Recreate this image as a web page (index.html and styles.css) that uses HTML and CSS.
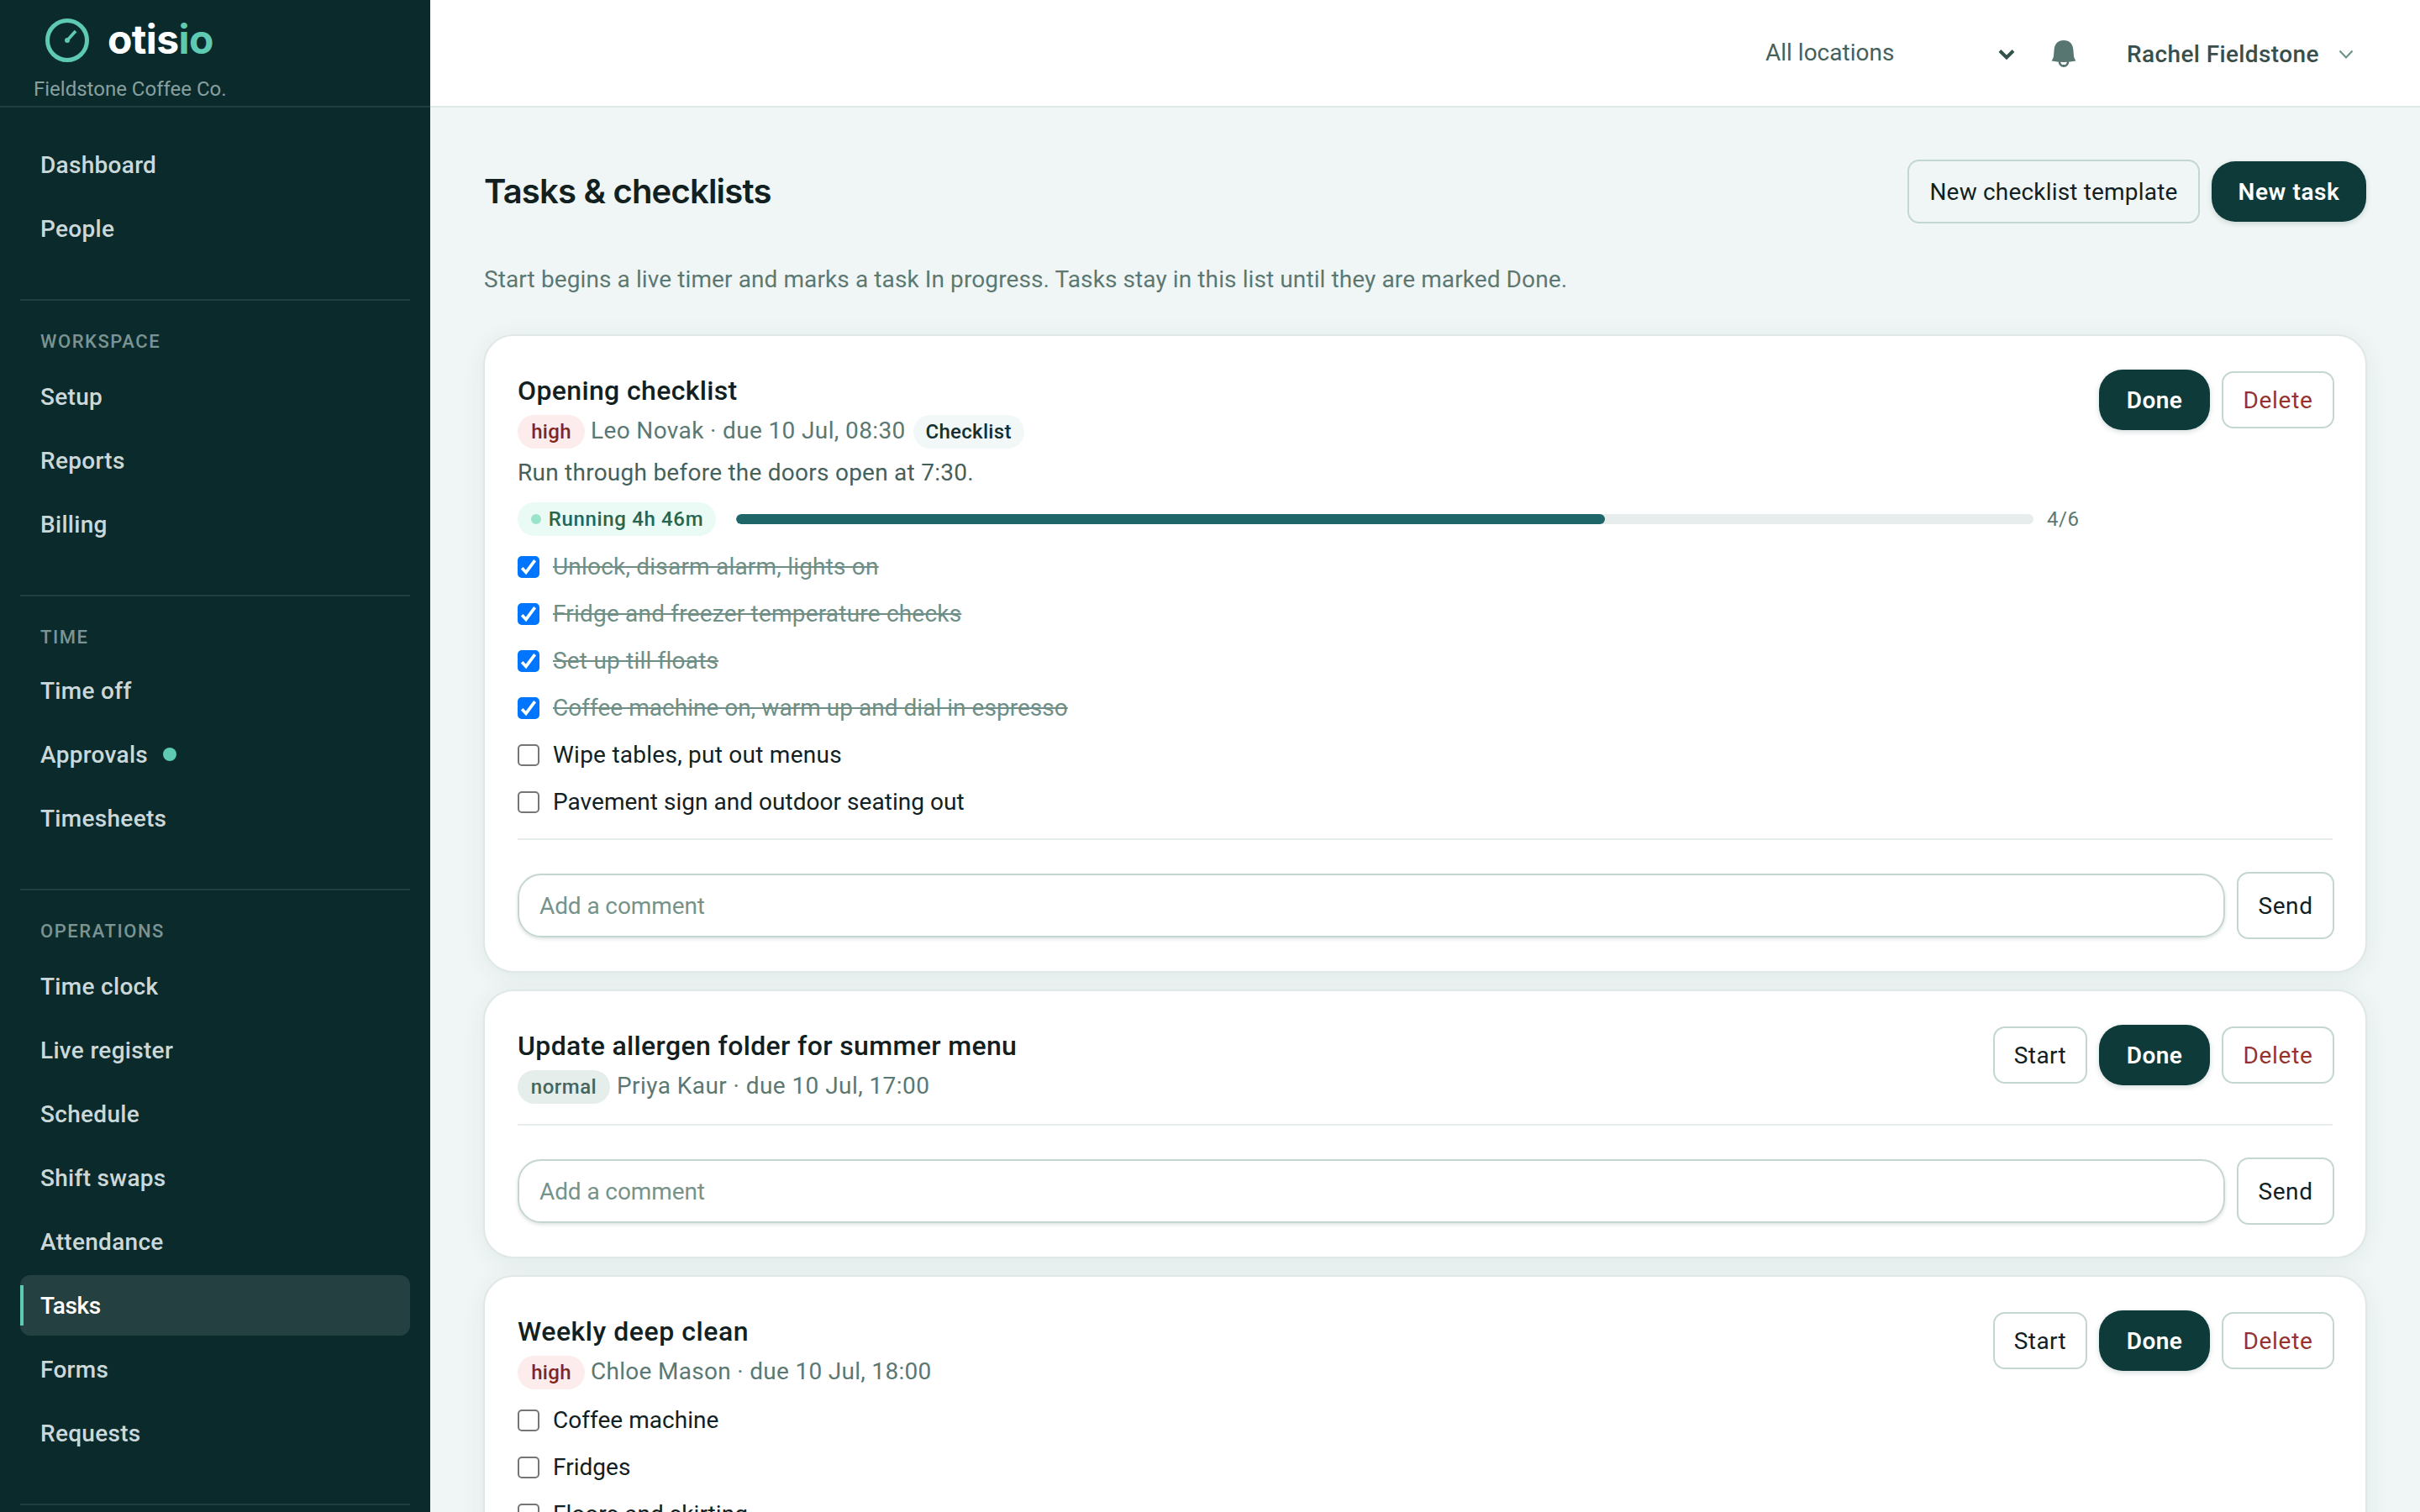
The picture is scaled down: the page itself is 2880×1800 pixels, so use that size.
FILE: index.html
```html
<!DOCTYPE html>
<html lang="en">
<head>
<meta charset="utf-8">
<title>Tasks &amp; checklists</title>
<link rel="stylesheet" href="styles.css">
</head>
<body>
<svg class="defs" width="0" height="0">
  <symbol id="check" viewBox="0 0 26 26"><path d="M5.2 14.2 10 19.4 20.6 5.2" fill="none" stroke="#fff" stroke-width="3.6"/></symbol>
</svg>
<div class="app">
  <aside class="sidebar">
    <div class="brand">
      <div class="logo">
        <svg class="logo-mark" viewBox="0 0 52 52"><circle cx="26" cy="26" r="23.5" fill="none" stroke="#5fcab3" stroke-width="5"/><path d="M26 26 36 15" stroke="#5fcab3" stroke-width="3.6"/><circle cx="26" cy="26" r="3" fill="#5fcab3"/></svg>
        <span class="logo-text">otis<span class="accent">io</span></span>
      </div>
      <div class="company">Fieldstone Coffee Co.</div>
    </div>
    <nav class="nav">
      <div class="nav-group">
        <a class="nav-item">Dashboard</a>
        <a class="nav-item">People</a>
      </div>
      <div class="nav-group">
        <div class="nav-label">WORKSPACE</div>
        <a class="nav-item">Setup</a>
        <a class="nav-item">Reports</a>
        <a class="nav-item">Billing</a>
      </div>
      <div class="nav-group">
        <div class="nav-label short">TIME</div>
        <a class="nav-item">Time off</a>
        <a class="nav-item">Approvals<span class="nav-dot"></span></a>
        <a class="nav-item">Timesheets</a>
      </div>
      <div class="nav-group">
        <div class="nav-label">OPERATIONS</div>
        <a class="nav-item">Time clock</a>
        <a class="nav-item">Live register</a>
        <a class="nav-item">Schedule</a>
        <a class="nav-item">Shift swaps</a>
        <a class="nav-item">Attendance</a>
        <a class="nav-item active">Tasks</a>
        <a class="nav-item">Forms</a>
        <a class="nav-item">Requests</a>
      </div>
      <div class="nav-group"></div>
    </nav>
  </aside>
  <div class="main">
    <header class="topbar">
      <div class="location"><span>All locations</span>
        <svg width="20" height="14" viewBox="0 0 20 14"><path d="M2 2.5 10 10.5 18 2.5" fill="none" stroke="#34504b" stroke-width="4"/></svg>
      </div>
      <svg class="bell" width="30" height="32" viewBox="0 0 30 32"><circle cx="15" cy="25.5" r="5" fill="none" stroke="#587671" stroke-width="2.8"/><path d="M15 0C8 0 4 4.4 3.6 11.5L3 18.500C2.800 21 1.800 22.300 .6 24.600Q7 26 15 26T29.400 24.600C28.200 22.300 27.200 21 27 18.500L26.400 11.500C26 4.400 22 0 15 0Z" fill="#587671"/><path d="M11.500 26.200Q15 25.600 18.500 26.200Q18 29 15 29T11.500 26.200Z" fill="#fff"/></svg>
      <div class="user"><span>Rachel Fieldstone</span>
        <svg width="18" height="12" viewBox="0 0 18 12"><path d="M1.500 1.500 9 9.500 16.500 1.500" fill="none" stroke="#6f9389" stroke-width="2.200"/></svg>
      </div>
    </header>
    <main class="content">
      <div class="page-head">
        <h1>Tasks &amp; checklists</h1>
        <div class="page-actions">
          <button class="btn template">New checklist template</button>
          <button class="btn primary new-task">New task</button>
        </div>
      </div>
      <p class="intro">Start begins a live timer and marks a task In progress. Tasks stay in this list until they are marked Done.</p>

      <section class="card">
        <div class="card-top">
          <div class="details">
            <h2>Opening checklist</h2>
            <div class="meta"><span class="pill high">high</span><span class="meta-text">Leo Novak · due 10 Jul, 08:30</span><span class="pill tag">Checklist</span></div>
            <p class="note">Run through before the doors open at 7:30.</p>
            <div class="progress-row"><span class="pill running"><i class="dot"></i>Running 4h 46m</span><div class="bar"><div class="fill" style="width:67%"></div></div><span class="count">4/6</span></div>
            <ul class="items">
              <li class="done"><span class="box"><svg><use href="#check"/></svg></span><span>Unlock, disarm alarm, lights on</span></li>
              <li class="done"><span class="box"><svg><use href="#check"/></svg></span><span>Fridge and freezer temperature checks</span></li>
              <li class="done"><span class="box"><svg><use href="#check"/></svg></span><span>Set up till floats</span></li>
              <li class="done"><span class="box"><svg><use href="#check"/></svg></span><span class="tight">Coffee machine on, warm up and dial in espresso</span></li>
              <li><span class="box"></span><span class="loose">Wipe tables, put out menus</span></li>
              <li><span class="box"></span><span class="tight">Pavement sign and outdoor seating out</span></li>
            </ul>
          </div>
          <div class="actions"><button class="btn primary">Done</button><button class="btn delete">Delete</button></div>
        </div>
        <div class="comment"><div class="field">Add a comment</div><button class="btn send">Send</button></div>
      </section>

      <section class="card">
        <div class="card-top">
          <div class="details">
            <h2>Update allergen folder for summer menu</h2>
            <div class="meta"><span class="pill normal">normal</span><span class="meta-text spaced">Priya Kaur · due 10 Jul, 17:00</span></div>
          </div>
          <div class="actions"><button class="btn start">Start</button><button class="btn primary">Done</button><button class="btn delete">Delete</button></div>
        </div>
        <div class="comment"><div class="field">Add a comment</div><button class="btn send">Send</button></div>
      </section>

      <section class="card">
        <div class="card-top">
          <div class="details">
            <h2 class="wide">Weekly deep clean</h2>
            <div class="meta"><span class="pill high">high</span><span class="meta-text close">Chloe Mason · due 10 Jul, 18:00</span></div>
            <ul class="items">
              <li><span class="box"></span><span class="tight">Coffee machine</span></li>
              <li><span class="box"></span><span class="tight">Fridges</span></li>
              <li><span class="box"></span><span class="tight">Floors and skirting</span></li>
            </ul>
          </div>
          <div class="actions"><button class="btn start">Start</button><button class="btn primary">Done</button><button class="btn delete">Delete</button></div>
        </div>
      </section>
    </main>
  </div>
</div>
</body>
</html>
```
FILE: styles.css
```css
* { box-sizing: border-box; }
body {
  margin: 0;
  height: 1800px;
  overflow: hidden;
  font-family: Roboto, "Noto Sans", sans-serif;
  font-size: 28px;
  color: #12211f;
  background: #f0f6f6;
}
h1, h2, p, ul { margin: 0; padding: 0; }
.defs { display: block; height: 0; }
.app { display: flex; height: 1800px; overflow: hidden; }

/* Sidebar */
.sidebar { width: 512px; flex: none; background: #0b2a2b; overflow: hidden; }
.brand { height: 128px; border-bottom: 2px solid #213f40; padding: 21px 0 0 54px; }
.logo { display: flex; align-items: center; gap: 22px; height: 53px; }
.logo-mark { width: 52px; height: 52px; display: block; }
.logo-text {
  font: 700 48px/53px Inter, sans-serif;
  letter-spacing: -0.6px;
  color: #fff;
  padding-bottom: 3px;
}
.accent { color: #5fcab3; }
.company { margin: 16px 0 0 -14px; font-size: 24px; line-height: 32px; color: #87a09f; }
.nav { padding: 32px 24px 0; }
.nav-group { display: flex; flex-direction: column; gap: 4px; padding-bottom: 48px; }
.nav-group + .nav-group { border-top: 2px solid #213f40; }
.nav-label {
  height: 74px;
  padding: 34px 0 0 24px;
  font-size: 22px;
  line-height: 30px;
  font-weight: 500;
  letter-spacing: 1.55px;
  color: #7b9493;
}
.nav-label.short { height: 72px; }
.nav-item {
  display: flex;
  align-items: center;
  height: 72px;
  flex: none;
  padding-left: 24px;
  border-radius: 12px;
  font-weight: 500;
  letter-spacing: 0.3px;
  color: #cbd8d9;
}
.nav-item.active {
  color: #fff;
  letter-spacing: -0.4px;
  background: linear-gradient(#5fcab3, #5fcab3) 0 50% / 4px 48px no-repeat, #244040;
}
.nav-dot { width: 16px; height: 16px; border-radius: 50%; background: #5fcab3; margin-left: 18px; }

/* Top bar */
.main { flex: 1; min-width: 0; }
.topbar {
  height: 128px;
  display: flex;
  align-items: center;
  justify-content: flex-end;
  padding-right: 79px;
  background: #fff;
  border-bottom: 2px solid #dfe9e7;
}
.location { display: flex; align-items: center; justify-content: space-between; width: 297px; margin-right: 43px; color: #46605c; }
.location span { line-height: 34px; padding-bottom: 1px; }
.location svg { margin-top: 3px; }
.bell { margin: 2px 60px 0 0; }
.user { display: flex; align-items: center; justify-content: space-between; width: 270px; margin-top: 3px; font-weight: 500; letter-spacing: 0.38px; color: #3a4f4c; }

/* Page */
.content { padding: 62px 64px 0; display: flex; flex-direction: column; }
.page-head { display: flex; align-items: center; justify-content: space-between; height: 76px; }
h1 { font: 600 40px/50px Inter, sans-serif; letter-spacing: -0.8px; }
.page-actions { display: flex; align-items: center; gap: 14px; }
.intro { margin: 49px 0 45px; line-height: 36px; letter-spacing: 0.1px; color: #5c7872; padding-bottom: 2px; }

.btn {
  font: 400 28px/32px Roboto, "Noto Sans", sans-serif;
  letter-spacing: 0.4px;
  height: 68px;
  padding: 2px 0 0;
  color: #12211f;
  background: #fff;
  border: 2px solid #c4d6d1;
  border-radius: 14px;
}
.btn.template { width: 348px; height: 76px; background: transparent; letter-spacing: 0.18px; }
.btn.primary {
  width: 132px;
  height: 72px;
  border: 0;
  border-radius: 28px;
  background: #0f3a3a;
  color: #fff;
  font-weight: 600;
  box-shadow: 0 2px 6px rgba(15, 58, 58, 0.18);
}
.btn.new-task { width: 184px; letter-spacing: 0.6px; }
.btn.start { width: 112px; }
.btn.delete { width: 134px; color: #96322f; letter-spacing: 0.7px; }
.btn.send { width: 116px; height: 80px; letter-spacing: 0.6px; }

/* Task cards */
.card {
  margin: 0 -1px 20px;
  padding: 38px 39px;
  border: 2px solid #dfe8e6;
  border-radius: 36px;
  background: #fff;
  box-shadow: 0 4px 28px rgba(20, 50, 48, 0.07);
}
.card-top { display: flex; align-items: flex-start; gap: 24px; }
.details { flex: 1; min-width: 0; }
h2 { font-size: 32px; line-height: 52px; padding-top: 1px; font-weight: 500; letter-spacing: 0.36px; }
h2.wide { letter-spacing: 0.55px; }
.actions { display: flex; align-items: center; gap: 14px; height: 72px; margin: 2px -2px 0 0; }
.meta { display: flex; height: 40px; margin-top: 3px; }
.meta-text { line-height: 37px; margin: 0 9px 0 7px; letter-spacing: 0.37px; color: #5c7872; }
.meta-text.spaced { letter-spacing: 0.43px; margin-left: 8px; }
.meta-text.close { letter-spacing: 0.3px; }
.pill {
  display: flex;
  align-items: center;
  justify-content: center;
  height: 40px;
  border-radius: 20px;
  font-size: 24px;
  font-weight: 500;
  letter-spacing: 0.3px;
}
.high { width: 80px; background: #fcecec; color: #85241f; }
.normal { width: 110px; background: #e6eeec; color: #466560; letter-spacing: 0.5px; }
.tag { width: 132px; background: #f1f8f7; color: #12302f; }
.running { width: 236px; background: #eafaf5; color: #266650; letter-spacing: 0.65px; gap: 9px; padding-left: 1px; }
.dot { width: 12px; height: 12px; border-radius: 50%; background: #9be3cb; }
.note { margin-top: 8px; line-height: 41px; letter-spacing: 0.25px; color: #46605c; }
.progress-row { display: flex; align-items: center; margin-top: 15px; height: 40px; }
.bar { flex: 1; height: 12px; margin: 0 16px 0 24px; border-radius: 6px; background: #e6edec; overflow: hidden; }
.fill { height: 12px; border-radius: 6px; background: #1e6668; }
.count { width: 38px; font-size: 24px; color: #5c7872; letter-spacing: 0.6px; }
.items { list-style: none; display: flex; flex-direction: column; gap: 18px; margin-top: 18px; }
.items li { display: flex; align-items: center; height: 38px; gap: 16px; line-height: 36px; letter-spacing: 0.2px; }
.items li .tight { letter-spacing: 0.03px; }
.items li .loose { letter-spacing: 0.25px; }
.box { width: 26px; height: 26px; border: 2px solid #767676; border-radius: 5px; background: #fff; }
.done .box { border: 0; background: #0075ff; }
.box svg { display: block; width: 26px; height: 26px; }
.done { color: #6f8f86; text-decoration: line-through; text-decoration-thickness: 2px; }

.comment {
  display: flex;
  align-items: center;
  gap: 14px;
  margin: 24px -2px 0 0;
  padding-top: 40px;
  background: linear-gradient(#e6edec, #e6edec) 0 0 / calc(100% - 2px) 2px no-repeat;
}
.field {
  flex: 1;
  height: 76px;
  padding: 0 24px;
  border: 2px solid #c4d6d1;
  border-radius: 28px;
  line-height: 73px;
  letter-spacing: -0.1px;
  color: #76938b;
  box-shadow: 0 2px 4px rgba(20, 50, 48, 0.14);
}
```
